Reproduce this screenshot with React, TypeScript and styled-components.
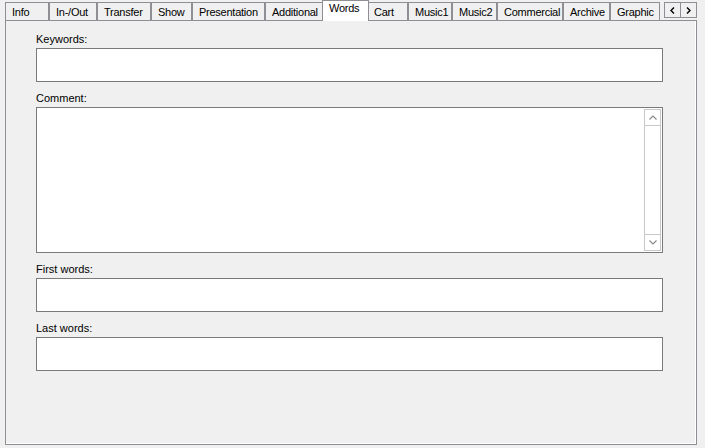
import React from "react";
import styled, { createGlobalStyle } from "styled-components";

const Global = createGlobalStyle`
  html, body {
    margin: 0;
    padding: 0;
    background: #f0f0f0;
    width: 705px;
    height: 448px;
    overflow: hidden;
  }
  body {
    font-family: "Liberation Sans", Arial, sans-serif;
    font-size: 11px;
    color: #000;
  }
`;

const Window = styled.div`
  display: flex;
  flex-direction: column;
  width: 705px;
  height: 448px;
  background: #f0f0f0;
`;

const TabStrip = styled.div`
  display: flex;
  align-items: flex-end;
  justify-content: space-between;
  height: 20px;
  padding: 0 8px 0 5px;
  position: relative;
  z-index: 1;
`;

const TabRow = styled.div`
  display: flex;
  align-items: flex-end;
  height: 20px;
`;

const Tab = styled.div<{ $w: number; $active?: boolean }>`
  box-sizing: border-box;
  width: ${(p) => p.$w}px;
  height: ${(p) => (p.$active ? 21 : 18)}px;
  margin-bottom: ${(p) => (p.$active ? -1 : 0)}px;
  margin-left: ${(p) => (p.$active ? -2 : 0)}px;
  margin-right: ${(p) => (p.$active ? -2 : 0)}px;
  border: 1px solid #8d8f94;
  border-bottom: none;
  background: ${(p) => (p.$active ? "#ffffff" : "#f0f0f0")};
  padding: ${(p) => (p.$active ? "1px" : "3px")} 0 0 6px;
  line-height: 13px;
  letter-spacing: -0.25px;
  white-space: nowrap;
  overflow: hidden;
  position: relative;
  z-index: ${(p) => (p.$active ? 2 : 1)};
`;

const ScrollButtons = styled.div`
  display: flex;
  align-self: flex-start;
  margin-top: 2px;
`;

const ScrollButton = styled.div<{ $first?: boolean }>`
  box-sizing: border-box;
  width: 17px;
  height: 16px;
  border: 1px solid #8d8f94;
  margin-left: ${(p) => (p.$first ? 0 : -1)}px;
  background: #f0f0f0;
  display: flex;
  align-items: center;
  justify-content: center;
`;

const Panel = styled.div`
  box-sizing: border-box;
  margin: 0 8px 0 5px;
  height: 425px;
  border: 1px solid #8d8f94;
  box-shadow: inset -1px -1px 0 #ffffff;
  background: #f0f0f0;
  padding: 12px 33px 0 30px;
  display: flex;
  flex-direction: column;
  gap: 10px;
`;

const Field = styled.div`
  display: flex;
  flex-direction: column;
  gap: 2px;
`;

const Label = styled.div`
  line-height: 13px;
  height: 13px;
`;

const TextBox = styled.div<{ $h: number }>`
  box-sizing: border-box;
  height: ${(p) => p.$h}px;
  border: 1px solid #7a7a7a;
  background: #ffffff;
  display: flex;
  justify-content: flex-end;
  padding: 1px;
`;

const VScroll = styled.div`
  width: 17px;
  display: flex;
  flex-direction: column;
  background: #ffffff;
  box-sizing: border-box;
  border-left: 1px solid #c8c8c8;
  border-right: 1px solid #c8c8c8;
`;

const VButton = styled.div`
  box-sizing: border-box;
  height: 17px;
  border-top: 1px solid #c8c8c8;
  border-bottom: 1px solid #c8c8c8;
  display: flex;
  align-items: center;
  justify-content: center;
`;

const Track = styled.div`
  flex: 1;
`;

const tabs: { label: string; w: number; active?: boolean }[] = [
  { label: "Info", w: 44 },
  { label: "In-/Out", w: 48 },
  { label: "Transfer", w: 54 },
  { label: "Show", w: 41 },
  { label: "Presentation", w: 73 },
  { label: "Additional", w: 59 },
  { label: "Words", w: 47, active: true },
  { label: "Cart", w: 41 },
  { label: "Music1", w: 44 },
  { label: "Music2", w: 45 },
  { label: "Commercial", w: 66 },
  { label: "Archive", w: 47 },
  { label: "Graphic", w: 50 },
];

const Chevron = ({ dir }: { dir: "left" | "right" }) => (
  <svg width="5" height="7" viewBox="0 0 5 7">
    <polyline
      points={dir === "left" ? "4,0.5 1,3.5 4,6.5" : "1,0.5 4,3.5 1,6.5"}
      fill="none"
      stroke="#000"
      strokeWidth="1.4"
    />
  </svg>
);

const Arrow = ({ dir }: { dir: "up" | "down" }) => (
  <svg width="8" height="5" viewBox="0 0 8 5">
    <polyline
      points={dir === "up" ? "0.5,4.5 4,1 7.5,4.5" : "0.5,0.5 4,4 7.5,0.5"}
      fill="none"
      stroke="#8a8a8a"
      strokeWidth="1.2"
    />
  </svg>
);

export default function App() {
  return (
    <Window>
      <Global />
      <TabStrip>
        <TabRow>
          {tabs.map((t) => (
            <Tab key={t.label} $w={t.w} $active={t.active}>
              {t.label}
            </Tab>
          ))}
        </TabRow>
        <ScrollButtons>
          <ScrollButton $first>
            <Chevron dir="left" />
          </ScrollButton>
          <ScrollButton>
            <Chevron dir="right" />
          </ScrollButton>
        </ScrollButtons>
      </TabStrip>
      <Panel>
        <Field>
          <Label>Keywords:</Label>
          <TextBox $h={34} />
        </Field>
        <Field>
          <Label>Comment:</Label>
          <TextBox $h={146}>
            <VScroll>
              <VButton>
                <Arrow dir="up" />
              </VButton>
              <Track />
              <VButton>
                <Arrow dir="down" />
              </VButton>
            </VScroll>
          </TextBox>
        </Field>
        <Field>
          <Label>First words:</Label>
          <TextBox $h={34} />
        </Field>
        <Field>
          <Label>Last words:</Label>
          <TextBox $h={34} />
        </Field>
      </Panel>
    </Window>
  );
}
